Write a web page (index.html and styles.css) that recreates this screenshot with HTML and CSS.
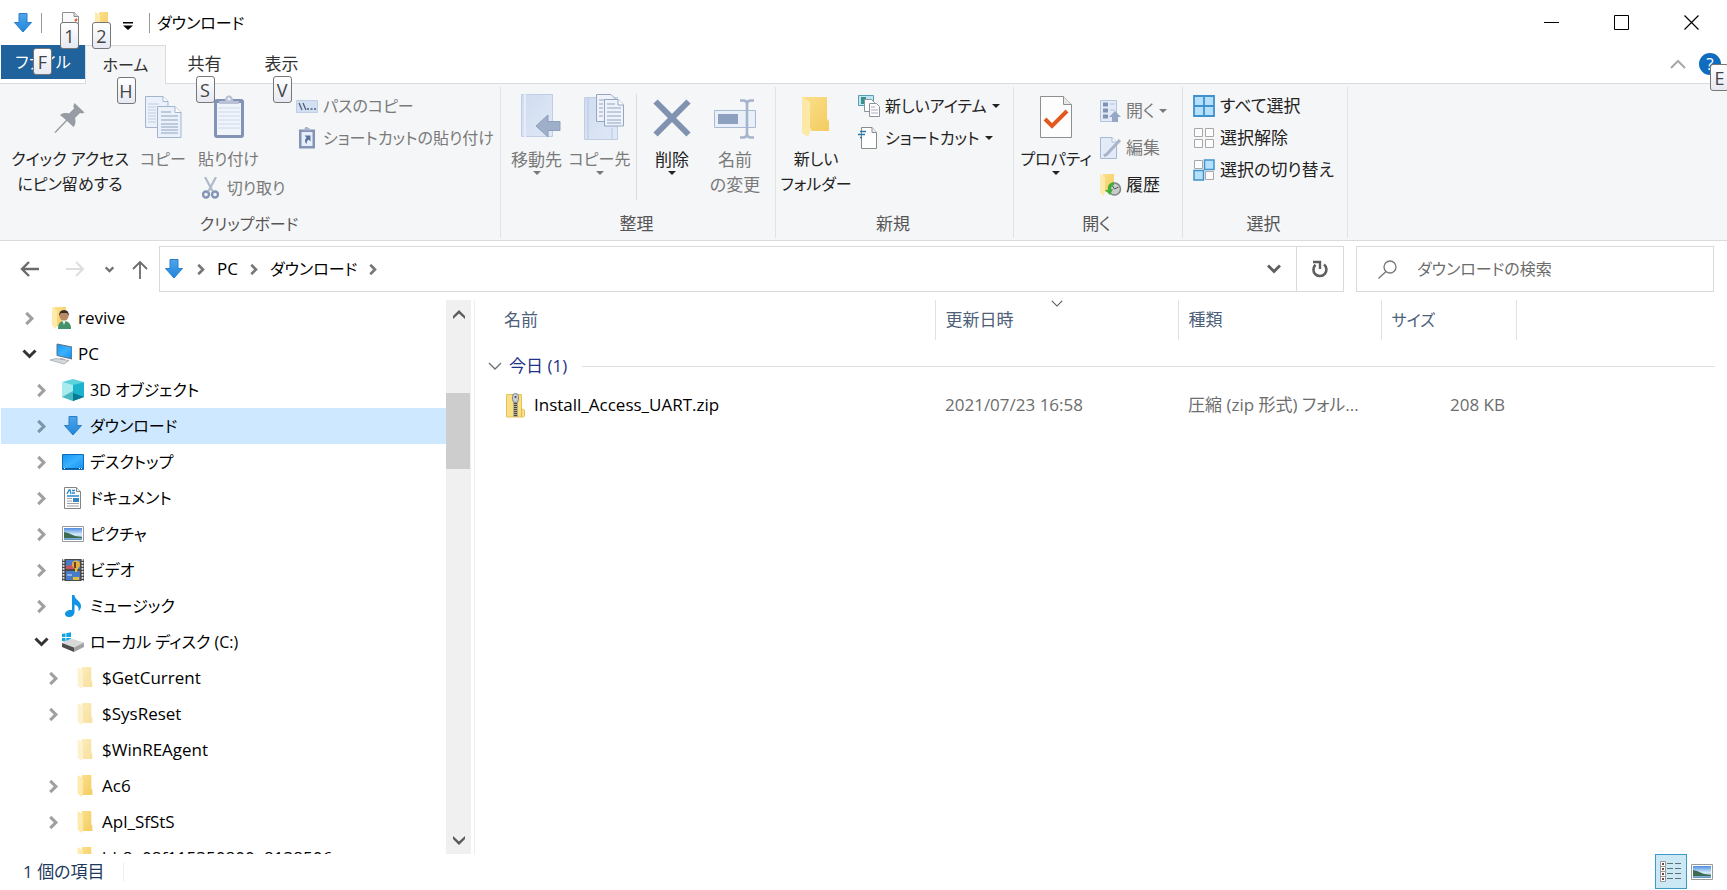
FILE: index.html
```html
<!DOCTYPE html>
<html lang="ja">
<head>
<meta charset="utf-8">
<title>ダウンロード</title>
<link rel="stylesheet" href="styles.css">
</head>
<body>
<svg class="defs" aria-hidden="true">
  <defs>
    <linearGradient id="blueArrow" x1="0" y1="0" x2="0" y2="1"><stop offset="0" stop-color="#4fa5ea"/><stop offset="1" stop-color="#1f86dc"/></linearGradient>
    <linearGradient id="folderBack" x1="0" y1="0" x2="1" y2="1"><stop offset="0" stop-color="#fbe08a"/><stop offset="1" stop-color="#f3cb60"/></linearGradient>
    <linearGradient id="screen" x1="0" y1="0" x2="1" y2="1"><stop offset="0" stop-color="#1298f4"/><stop offset=".5" stop-color="#3bb0ff"/><stop offset="1" stop-color="#0f92f0"/></linearGradient>
    <linearGradient id="sky" x1="0" y1="0" x2="0" y2="1"><stop offset="0" stop-color="#4f8de0"/><stop offset=".55" stop-color="#d5ecfa"/><stop offset="1" stop-color="#5b93bf"/></linearGradient>
    <linearGradient id="sheet" x1="0" y1="0" x2="1" y2="1"><stop offset="0" stop-color="#cfdcf0"/><stop offset="1" stop-color="#dfe8f6"/></linearGradient>
    <symbol id="down" viewBox="0 0 18 20"><path d="M5 .5h8v9h4.500L9 19 .5 9.500H5z" fill="url(#blueArrow)" stroke="#2b7fc8"/></symbol>
    <symbol id="folder" viewBox="0 0 14 21"><path d="M4 0h9v13l1 1v5H4z" fill="url(#folderBack)"/><path d="M0 0l5 3v15l-1 3-4-3z" fill="#fdeaac"/></symbol>
    <symbol id="chevR" viewBox="0 0 10 14"><path d="M1.500 1l6 6-6 6" fill="none" stroke="currentColor" stroke-width="3.400"/></symbol>
    <symbol id="chevD" viewBox="0 0 14 10"><path d="M1 1.500l6 6 6-6" fill="none" stroke="currentColor" stroke-width="3"/></symbol>
    <symbol id="thinD" viewBox="0 0 14 8"><path d="M1 1l6 6 6-6" fill="none" stroke="currentColor" stroke-width="1.300"/></symbol>
    <symbol id="picture" viewBox="0 0 22 16"><path d="M.5.5h21v15H.5z" fill="#fff" stroke="#9a9a9a"/><path d="M2 2h18v12H2z" fill="url(#sky)"/><path d="M2 6l4 1 7 3 7 1v1H2z" fill="#3d6b52"/></symbol>
  </defs>
</svg>

<header class="titlebar">
  <svg class="ic-down"><use href="#down"/></svg>
  <span class="bar"></span>
  <button class="quick" aria-label="プロパティ"><svg width="17" height="22" viewBox="0 0 17 22"><path d="M.5.5H12l4.500 4v17H.5z" fill="#fafafa" stroke="#8f8f8f"/><path d="M12 .5v4h4.500" fill="#ddd" stroke="#8f8f8f"/><path d="M13 9l2-2" stroke="#d8552a" stroke-width="2"/></svg><kbd class="tip tip-quick">1</kbd></button>
  <button class="quick" aria-label="新しいフォルダー"><svg width="14" height="21"><use href="#folder"/></svg><kbd class="tip tip-quick">2</kbd></button>
  <button class="customize" aria-label="クイック アクセス ツール バーのユーザー設定"><svg width="10" height="8" viewBox="0 0 10 8"><path d="M0 0h10v1.500H0zM0 3.500h10L5 8z"/></svg></button>
  <span class="bar"></span>
  <h1>ダウンロード</h1>
  <div class="window-buttons">
    <button aria-label="最小化"><svg width="15" height="15"><path d="M0 7.500h15" stroke="#000"/></svg></button>
    <button aria-label="最大化"><svg width="15" height="15"><path d="M.5.5h14v14H.5z" fill="none" stroke="#000"/></svg></button>
    <button aria-label="閉じる"><svg width="15" height="15"><path d="M.5.5l14 14M14.500.5l-14 14" stroke="#000" stroke-width="1.200"/></svg></button>
  </div>
</header>

<nav class="tabs">
  <button class="tab file kana">ファイル<kbd class="tip tip-file">F</kbd></button>
  <button class="tab home kana">ホーム<kbd class="tip tip-tab">H</kbd></button>
  <button class="tab">共有<kbd class="tip tip-tab">S</kbd></button>
  <button class="tab">表示<kbd class="tip tip-tab">V</kbd></button>
  <div class="tabs-end">
    <button aria-label="リボンの最小化"><svg width="16" height="10" viewBox="0 0 16 10"><path d="M1 9l7-7 7 7" fill="none" stroke="#a8a8a8" stroke-width="2"/></svg></button>
    <button class="help" aria-label="ヘルプ">?<kbd class="tip tip-help">E</kbd></button>
  </div>
</nav>

<section class="ribbon">
  <div class="group clipboard">
    <div class="tools">
      <button class="big w-pin kana">
        <svg width="32" height="32" viewBox="0 0 32 32"><path d="M20.500 1l10 9.500-2.500 1-2-.5-5 5c1 3.500.5 7-1.500 9L13 19 2 30.500l-1.500.5.500-1.500L12 18l-6-5c2.500-2 5.500-2.500 9-1.500l5-5-.7-2.500z" fill="#969ca3"/></svg>
        <span>クイック アクセス<br>にピン留めする</span>
      </button>
      <button class="big off w-copy kana">
        <svg width="37" height="42" viewBox="0 0 37 42"><g fill="#eaf1fa" stroke="#a4b4ce"><path d="M.5.5H18l5 5v26H.5z"/><path d="M12.500 10.500H30l6 6v25h-23.500z"/><path d="M30 10.500v6h6M18 .5v5h5" fill="#fff"/></g><path d="M3 8h11M3 11h8M3 14h8M3 17h8M3 20h8M3 23h8M3 26h8" stroke="#c2cde0"/><path d="M16 16h10M16 20h17M16 24h17M16 28h17M16 31h17M16 34h17M16 37h17" stroke="#90a2bf"/></svg>
        <span>コピー</span>
      </button>
      <div class="stack paste">
        <button class="big off kana">
          <svg width="30" height="43" viewBox="0 0 30 43"><rect y="4" width="30" height="39" rx="3" fill="#8293b5"/><path d="M3 8h24v32H3z" fill="#eff4fb"/><path d="M4 13h22M4 17h22M4 21h22M4 25h22M4 29h22M4 33h22" stroke="#cdd9ea"/><path d="M5 9V6h6c0-3 1-5.500 4-5.500S19 3 19 6h6v3z" fill="#b8c2d4"/><circle cx="15" cy="4" r="1.500" fill="#eef2f8"/></svg>
          <span>貼り付け</span>
        </button>
        <button class="small cut off kana"><svg width="17" height="22" viewBox="0 0 17 22"><path d="M3 0l7.500 14M14 0L6.500 14" stroke="#b0bacb" stroke-width="2.200"/><g fill="none" stroke="#8394b4" stroke-width="2.400"><circle cx="4" cy="17.500" r="3"/><circle cx="13" cy="17.500" r="3"/></g></svg>切り取り</button>
      </div>
      <div class="stack paths">
        <button class="small off kana"><svg width="22" height="13" viewBox="0 0 22 13"><path d="M.5.5h21v12H.5z" fill="#d3e0f2" stroke="#c0cfe4"/><path d="M3 3l3 7M7 3l3 7" stroke="#4e5f80" stroke-width="1.300"/><path d="M11 9h2M14.500 9h2M18 9h2" stroke="#4e5f80" stroke-width="1.500"/></svg>パスのコピー</button>
        <button class="small off kana"><svg width="22" height="22" viewBox="0 0 22 22"><path d="M3 2.500h16v19H3z" fill="#8293b5"/><path d="M5.500 5h11v14h-11z" fill="#e6eefa"/><path d="M7 3.500h8L13 1h-1a1.500 1.500 0 0 0-3 0z" fill="#a9b5ca"/><path d="M8.500 8.500h6v6l-2-2q-2 1-2 4.500-3-3 0-6.500z" fill="#5c7199"/></svg>ショートカットの貼り付け</button>
      </div>
    </div>
    <h2 class="kana">クリップボード</h2>
  </div>

  <div class="group organize">
    <div class="tools">
      <button class="big off w-move">
        <svg width="40" height="44" viewBox="0 0 40 44"><path d="M.5.5h31v42H.5z" fill="url(#sheet)" stroke="#c0cee4"/><path d="M4 0v43" stroke="#e6edf8" stroke-width="2"/><path d="M39 27.500v9H27V43L15 32l12-11v6.500z" fill="#9fafc9" stroke="#8e9fbb"/></svg>
        <span>移動先</span><i class="caret"></i>
      </button>
      <button class="big off w-move kana">
        <svg width="40" height="46" viewBox="0 0 40 46"><path d="M.5 3.500h33v42H.5z" fill="url(#sheet)" stroke="#c0cee4"/><path d="M4 4v41M28 34v11" stroke="#b9c9e0"/><g fill="#eef3fb" stroke="#95a6c1"><path d="M12.500.5H27l5 5v22H12.500z"/><path d="M20.500 5.500H34l5.500 5.500v21h-19z"/><path d="M34 5.500V11h5.500" fill="#fff"/></g><path d="M15 6h5M15 10h4M15 14h4M15 18h4M15 22h4M23 10h8M23 14h14M23 18h14M23 22h14M23 26h14M23 29h14" stroke="#93a4c0"/></svg>
        <span>コピー先</span><i class="caret"></i>
      </button>
      <span class="divider"></span>
      <button class="big w-delete">
        <svg width="38" height="38" viewBox="0 0 38 38"><path d="M2.500 2.500l33 33M35.500 2.500l-33 33" stroke="#8191b0" stroke-width="6"/></svg>
        <span>削除</span><i class="caret"></i>
      </button>
      <button class="big off w-rename">
        <svg width="42" height="40" viewBox="0 0 42 40"><path d="M.5 11.500h41v17H.5z" fill="#e9f0fa" stroke="#aab9d2"/><path d="M4 15h20v10H4z" fill="#8ea0bf"/><path d="M26 1.500h3q4 0 4 4v29q0 4-4 4h-3M40 1.500h-3q-4 0-4 4M33 34q0 4.500 4 4.500h3" fill="none" stroke="#a6b4cb" stroke-width="2.600"/></svg>
        <span>名前<br>の変更</span>
      </button>
    </div>
    <h2>整理</h2>
  </div>

  <div class="group new">
    <div class="tools">
      <button class="big w-folder kana">
        <svg width="28" height="42" viewBox="0 0 28 42"><path d="M0 1h25v22l2 2v10H9z" fill="url(#folderBack)"/><path d="M0 1l8 5v30l-2 5-6-4z" fill="#fce9a8"/></svg>
        <span>新しい<br>フォルダー</span>
      </button>
      <div class="stack">
        <button class="small kana"><svg width="22" height="22" viewBox="0 0 22 22"><path d="M.5.500h15v10H.5z" fill="#bfe6f5" stroke="#5d9db3"/><path d="M3 2h5v7H3z" fill="#3c8f86"/><g fill="#fff" stroke="#8a929d"><path d="M6.500 4.500h7l3 3v9h-10z"/><path d="M11.500 8.500h7l3 3v10h-10z"/></g><path d="M13 12h4M13 15h7M13 18h7" stroke="#b3a8bd"/></svg>新しいアイテム<i class="caret"></i></button>
        <button class="small kana"><svg width="22" height="22" viewBox="0 0 22 22"><path d="M3.500.5H14l4.500 5v16h-15z" fill="#fff" stroke="#8b8b8b"/><path d="M14 .5v5h4.500" fill="#eee" stroke="#8b8b8b"/><path d="M2 4.500h6M0 7.500h7M2 10.500h2" stroke="#2779a8" stroke-width="1.500"/></svg>ショートカット<i class="caret"></i></button>
      </div>
    </div>
    <h2>新規</h2>
  </div>

  <div class="group open">
    <div class="tools">
      <button class="big w-prop kana">
        <svg width="32" height="42" viewBox="0 0 32 42"><path d="M.5.5h23l8 8v33H.5z" fill="#fdfdfd" stroke="#8f8f8f"/><path d="M23.500.5v8h8" fill="#e8e8e8" stroke="#8f8f8f"/><path d="M5 23l7 7 15-15" fill="none" stroke="#e2591f" stroke-width="4"/></svg>
        <span>プロパティ</span><i class="caret"></i>
      </button>
      <div class="stack open-list">
        <button class="small off"><svg width="22" height="22" viewBox="0 0 22 22"><path d="M.5.5h16v21H.5z" fill="#e3ebf8" stroke="#b4c2da"/><path d="M3 2.500h5v4H3zM3 8.500h5v4H3zM3 14.500h5v4H3z" fill="#8193b4"/><path d="M10 4h5M10 10h5" stroke="#b4c2da"/><path d="M15 11l6 6h-3v5h-6v-5H9z" fill="#96a7c5"/></svg>開く<i class="caret"></i></button>
        <button class="small off"><svg width="22" height="22" viewBox="0 0 22 22"><path d="M.5.5H12l4.500 4.500v16.500H.5z" fill="#e3ebf8" stroke="#a9b8d2"/><path d="M12 .5V5h4.500" fill="#fff" stroke="#a9b8d2"/><path d="M20 3L7 17l-3 2" fill="none" stroke="#a7b4ca" stroke-width="3"/></svg>編集</button>
        <button class="small"><svg width="22" height="22" viewBox="0 0 22 22"><path d="M3 0h11v18H3z" fill="url(#folderBack)"/><path d="M0 0l5 3v15l-1 4-4-3z" fill="#fdeaac"/><circle cx="14.500" cy="15" r="6" fill="#c8ccca" stroke="#7f8583" stroke-width="1.500"/><path d="M14.500 15l-2-3M14.500 15l4-2" stroke="#555"/><path d="M14 8q-7 1-6 8H5l5 5 3-6h-2q0-3 3-4z" fill="#3fae3d"/></svg>履歴</button>
      </div>
    </div>
    <h2>開く</h2>
  </div>

  <div class="group select">
    <div class="tools">
      <div class="stack">
        <button class="small"><svg width="22" height="22" viewBox="0 0 22 22"><path d="M1 1h20v20H1zM11 1v20M1 11h20" fill="#b5e0fb" stroke="#4092cd" stroke-width="1.800"/></svg>すべて選択</button>
        <button class="small"><svg width="22" height="22" viewBox="0 0 22 22"><path d="M1.500 1.500h8v8h-8zM12.500 1.500h8v8h-8zM1.500 12.500h8v8h-8zM12.500 12.500h8v8h-8z" fill="#fdfdfd" stroke="#a8a8a8"/></svg>選択解除</button>
        <button class="small"><svg width="22" height="22" viewBox="0 0 22 22"><path d="M1.500 1.500h8v8h-8zM12.500 12.500h8v8h-8z" fill="#fdfdfd" stroke="#a8a8a8"/><path d="M11.500 1h9.500v9.500h-9.500zM1 11.500h9.500V21H1z" fill="#b5e0fb" stroke="#4092cd" stroke-width="1.500"/></svg>選択の切り替え</button>
      </div>
    </div>
    <h2>選択</h2>
  </div>
</section>

<div class="navrow">
  <button aria-label="戻る"><svg width="19" height="16" viewBox="0 0 19 16"><path d="M19 8H2M9 1L2 8l7 7" fill="none" stroke="#6b6b6b" stroke-width="2.400"/></svg></button>
  <button class="forward" aria-label="進む"><svg width="19" height="16" viewBox="0 0 19 16"><path d="M0 8h17M10 1l7 7-7 7" fill="none" stroke="#dedede" stroke-width="2.200"/></svg></button>
  <button class="recent" aria-label="最近表示した場所"><svg width="9" height="7" viewBox="0 0 14 10"><path d="M1 1.500l6 6 6-6" fill="none" stroke="#707070" stroke-width="3.500"/></svg></button>
  <button class="up" aria-label="上へ"><svg width="16" height="19" viewBox="0 0 16 19"><path d="M8 19V2M1 9l7-7 7 7" fill="none" stroke="#6b6b6b" stroke-width="1.800"/></svg></button>
  <div class="address">
    <svg class="ic-down"><use href="#down"/></svg>
    <svg class="crumb"><use href="#chevR"/></svg><a href="#">PC</a>
    <svg class="crumb"><use href="#chevR"/></svg><a class="kana" href="#">ダウンロード</a>
    <svg class="crumb"><use href="#chevR"/></svg>
    <button class="history" aria-label="以前の場所"><svg width="14" height="10"><use href="#chevD"/></svg></button>
    <button class="refresh" aria-label="最新の情報に更新"><svg width="18" height="18" viewBox="0 0 18 18"><path d="M4.500 4.800A6.500 6.500 0 1 0 13 4.500" fill="none" stroke="#5f5f5f" stroke-width="2.600"/><path d="M2 2h7v7" fill="none" stroke="#5f5f5f" stroke-width="2.400"/></svg></button>
  </div>
  <label class="search"><svg width="19" height="19" viewBox="0 0 19 19"><circle cx="12" cy="7" r="6" fill="none" stroke="#777" stroke-width="1.300"/><path d="M8 11.500l-7.500 7" stroke="#777" stroke-width="1.300"/></svg><input class="kana" type="search" aria-label="検索" placeholder="ダウンロードの検索"></label>
</div>

<main>
  <aside>
    <ul class="tree">
      <li><svg class="tw"><use href="#chevR"/></svg><svg class="ic" viewBox="0 0 22 22"><path d="M4 0h12v19H4z" fill="url(#folderBack)"/><path d="M2 0l5 3v15l-1 4-4-3z" fill="#fdeaac"/><path d="M8 22q0-8 6-8 7 0 7 8z" fill="#44916c"/><path d="M12 13h4l-2 5z" fill="#e8f2ee"/><circle cx="14" cy="9" r="4.500" fill="#b98a68"/><path d="M9 9q0-6 5-6t5 6l-2-3h-6z" fill="#3a2c25"/></svg>revive</li>
      <li class="expanded"><svg class="tw"><use href="#chevD"/></svg><svg class="ic" viewBox="0 0 22 22"><path d="M7 1l15 3v12L7 12.500z" fill="url(#screen)" stroke="#62707c"/><path d="M10 15l5 1-1 3-4-2z" fill="#9aa4ad"/><path d="M0 17l6-1.500 13 2L14 21z" fill="#d5d9dc" stroke="#a2a8ae" stroke-width=".8"/></svg>PC</li>
      <li class="l1 kana"><svg class="tw"><use href="#chevR"/></svg><svg class="ic" viewBox="0 0 22 22"><path d="M0 3l11-3 11 3-11 4z" fill="#5fd3dd"/><path d="M0 3l11 3v16L0 18z" fill="#a6ebee"/><path d="M22 3L11 6v16l11-4z" fill="#1cb3cf"/><path d="M0 18l11-6v10z" fill="#4bb9c1"/><path d="M22 18l-11-4v8z" fill="#067b93"/></svg>3D オブジェクト</li>
      <li class="l1 kana current"><svg class="tw"><use href="#chevR"/></svg><svg class="ic" viewBox="-2 -1 22 22"><path d="M5 .5h8v9h4.500L9 19 .5 9.500H5z" fill="url(#blueArrow)" stroke="#2b7fc8"/></svg>ダウンロード</li>
      <li class="l1 kana"><svg class="tw"><use href="#chevR"/></svg><svg class="ic" viewBox="0 0 22 22"><path d="M.5 3.500h21v15H.5z" fill="url(#screen)" stroke="#0d6db8"/><path d="M1 17.500h20" stroke="#0a5b9e"/><path d="M2 17.500h1M17 17.500h1M19 17.500h1" stroke="#fff"/></svg>デスクトップ</li>
      <li class="l1 kana"><svg class="tw"><use href="#chevR"/></svg><svg class="ic" viewBox="0 0 22 22"><path d="M2.500.5h12l4 4v17h-16z" fill="#fff" stroke="#848484"/><path d="M14.500.5v4h4" fill="#eee" stroke="#848484"/><path d="M5 7l2-4h1l1 4M10 3.500h3M10 6h3M5 9h12" fill="none" stroke="#288bd0" stroke-width="1.300"/><path d="M5 11.500h5M5 14h5M5 16.500h12M5 19h12" stroke="#a0a0a0"/><path d="M11 11h6v4h-6z" fill="#3486c2"/></svg>ドキュメント</li>
      <li class="l1 kana"><svg class="tw"><use href="#chevR"/></svg><svg class="ic"><use href="#picture"/></svg>ピクチャ</li>
      <li class="l1 kana"><svg class="tw"><use href="#chevR"/></svg><svg class="ic" viewBox="0 0 22 22"><path d="M0 0h22v22H0z" fill="#494949"/><path d="M1.500 0v22M20.500 0v22" stroke="#e8e8e8" stroke-width="1.800" stroke-dasharray="1.700 1.300"/><path d="M4 1h14v9H4zM4 12h14v9H4z" fill="#4a7bc8"/><path d="M4 7l5-1 4 4H4z" fill="#cf5262"/><circle cx="14" cy="5.500" r="4" fill="#e0b13c"/><path d="M12 3h2v6h-2z" fill="#7a3a1a"/><path d="M13 9h3l-1 4h-2zM11 18h6v3h-6z" fill="#e6bc32"/><path d="M5 15h5v2H5z" fill="#8fb4e8"/></svg>ビデオ</li>
      <li class="l1 kana"><svg class="tw"><use href="#chevR"/></svg><svg class="ic" viewBox="0 0 22 22"><path d="M10 0h2.500c0 5 6.500 5.500 6.500 11 0 2-.8 4-2.500 5.500.8-4-.8-6-4-7V17c0 3-2.500 5-5.500 5-2.400 0-4-1.200-4-3 0-2.500 3-4.500 7-4z" fill="#1193e6"/></svg>ミュージック</li>
      <li class="l1 kana expanded"><svg class="tw"><use href="#chevD"/></svg><svg class="ic" viewBox="0 0 22 22"><path d="M0 3l3.500-.7V6H0zM4.300 2.200L9 1.300V6H4.300zM0 7h3.500v3.500L0 10zM4.300 7H9v4.400l-4.700-.8z" fill="#12a4e4"/><path d="M0 12l9-4.500 13 4-10 5z" fill="#d9d9d9"/><path d="M0 12l12 4.500V21L0 16z" fill="#4d4d4d"/><path d="M22 11.500V16l-10 5v-4.500z" fill="#a3a3a3"/></svg>ローカル ディスク (C:)</li>
      <li class="l2"><svg class="tw"><use href="#chevR"/></svg><svg class="ic faded"><use href="#folder"/></svg>$GetCurrent</li>
      <li class="l2"><svg class="tw"><use href="#chevR"/></svg><svg class="ic faded"><use href="#folder"/></svg>$SysReset</li>
      <li class="l2"><span class="tw"></span><svg class="ic faded"><use href="#folder"/></svg>$WinREAgent</li>
      <li class="l2"><svg class="tw"><use href="#chevR"/></svg><svg class="ic"><use href="#folder"/></svg>Ac6</li>
      <li class="l2"><svg class="tw"><use href="#chevR"/></svg><svg class="ic"><use href="#folder"/></svg>Apl_SfStS</li>
      <li class="l2"><span class="tw"></span><svg class="ic"><use href="#folder"/></svg>bb8a08f115350800a8138506</li>
    </ul>
    <div class="scroll">
      <button aria-label="上へスクロール"><svg width="12" height="9" viewBox="0 0 12 9"><path d="M0 6l6-6 6 6v3L6 3.500 0 9z" fill="#5a5a5a"/></svg></button>
      <div class="track"><div class="thumb"></div></div>
      <button aria-label="下へスクロール"><svg width="12" height="9" viewBox="0 0 12 9"><path d="M0 3l6 6 6-6V0L6 5.500 0 0z" fill="#5a5a5a"/></svg></button>
    </div>
  </aside>
  <section class="files">
    <table>
      <colgroup><col class="c-name"><col class="c-date"><col class="c-type"><col class="c-size"><col></colgroup>
      <thead><tr><th class="name">名前</th><th>更新日時<svg class="sort" width="12" height="7"><use href="#thinD"/></svg></th><th>種類</th><th class="kana">サイズ</th><td></td></tr></thead>
      <tbody>
        <tr class="group-row"><td colspan="5"><div><svg width="14" height="8"><use href="#thinD"/></svg><span>今日 (1)</span><hr></div></td></tr>
        <tr class="file-row">
          <td class="name"><div><svg width="19" height="25" viewBox="0 0 19 25"><path d="M.5 1.500h15V16l3 1v6l-1 1H.5z" fill="#fbdf85" stroke="#e5c25a"/><path d="M15.500 15v9" stroke="#e0b94e"/><path d="M7 1h5v23H7z" fill="#b5ae8c"/><path d="M9.500 10v14" stroke="#444" stroke-width="3" stroke-dasharray="1 1"/><rect x="6.500" y=".5" width="6" height="9" rx="3" fill="#c9cdd0" stroke="#85898c"/><circle cx="9.500" cy="4" r="1" fill="#444"/></svg>Install_Access_UART.zip</div></td>
          <td>2021/07/23 16:58</td><td>圧縮 (zip 形式) フォル...</td><td class="size">208 KB</td><td></td>
        </tr>
      </tbody>
    </table>
  </section>
</main>

<footer>
  <span class="count">1 個の項目</span>
  <div class="views">
    <button class="active" aria-label="詳細"><svg width="22" height="22" viewBox="0 0 22 22"><path d="M.5.5h5v5h-5zM.5 5.500h5v5h-5zM.5 10.500h5v5h-5zM.5 15.500h5v5h-5z" fill="#fff" stroke="#999"/><path d="M2 3h2M2 8h2M2 13h2M2 18h2" stroke="#744" stroke-width="2"/><path d="M7 2.500h6M15 2.500h6M7 7.500h6M15 7.500h6M7 12.500h6M15 12.500h6M7 17.500h6M15 17.500h6" stroke="#5d7078"/></svg></button>
    <button aria-label="大アイコン"><svg width="22" height="16"><use href="#picture"/></svg></button>
  </div>
</footer>
</body>
</html>
```

FILE: styles.css
```css
* { box-sizing: border-box; }
body {
  margin: 0;
  height: 100vh;
  display: flex;
  flex-direction: column;
  overflow: hidden;
  background: #fff;
  color: #111;
  font: 17px/24px "Open Sans", "Noto Sans CJK JP", sans-serif;
  font-feature-settings: "palt";
}
button {
  border: 0;
  padding: 0;
  background: none;
  color: inherit;
  font: inherit;
  font-feature-settings: inherit;
}
svg { display: block; flex: none; }
.defs { position: absolute; width: 0; height: 0; }
.ic-down { width: 18px; height: 20px; }

.tip {
  position: absolute;
  z-index: 2;
  width: 19px;
  height: 27px;
  border: 1px solid #777;
  border-radius: 3px;
  background: linear-gradient(#fff, #e6e9f2);
  color: #444;
  font: 18px/26px "Open Sans", sans-serif;
  text-align: center;
}

/* Title bar */
.titlebar {
  display: flex;
  align-items: center;
  height: 45px;
  padding-left: 14px;
  flex: none;
}
.bar { width: 1px; height: 20px; margin-left: 9px; background: #999; }
.quick { position: relative; display: flex; justify-content: center; width: 32px; }
.bar + .quick { margin-left: 12px; }
.tip-quick { left: 6px; top: 10px; }
.customize { margin-left: 5px; padding-top: 6px; }
.customize + .bar { margin-left: 16px; }
h1 { margin: 0 0 0 7px; font-size: 16px; font-weight: 400; color: #000; }
.window-buttons { display: flex; margin: 0 1px 0 auto; }
.window-buttons button { display: flex; justify-content: center; width: 70px; }

/* Tabs */
.tabs { display: flex; height: 38px; padding-left: 1px; flex: none; }
.tab { position: relative; width: 77px; height: 38px; color: #333; }
.tab.file { width: 84px; height: 34px; background: #20629b; color: #fff; }
.tab.home {
  z-index: 1;
  width: 81px;
  height: 39px;
  border: 1px solid #dadbdc;
  border-bottom: 0;
  background: #f5f6f7;
}
.tip-file { left: 32px; top: 3px; }
.tip-tab { left: calc(50% - 9px); top: 31px; }
.tabs-end { display: flex; align-items: center; gap: 13px; margin-left: auto; padding-right: 6px; }
.help { position: relative; width: 22px; height: 22px; border-radius: 50%; background: #0f6cbf; color: #fff; line-height: 22px; }
.tip-help { left: 11px; top: 11px; }

/* Ribbon */
.ribbon {
  display: flex;
  flex: none;
  height: 158px;
  padding: 3px 0 2px 1px;
  border: solid #dadbdc;
  border-width: 1px 0;
  background: #f5f6f7;
  color: #222;
}
.group { display: flex; flex-direction: column; border-right: 1px solid #e1e2e4; }
.tools { display: flex; flex: 1; padding-top: 7px; }
.clipboard { width: 500px; }
.organize { width: 275px; }
.new { width: 238px; }
.open { width: 169px; }
.select { width: 165px; }
.group h2 { margin: 0; padding: 0 3px 2px 0; color: #555; font-size: 17px; font-weight: 400; text-align: center; }
.big { position: relative; display: flex; flex-direction: column; align-items: center; height: 113px; }
.big svg { margin-bottom: auto; }
.big span { height: 60px; line-height: 25px; white-space: nowrap; }
.big .caret { position: absolute; top: 77px; left: calc(50% - 4px); }
.off { color: #7a7a7a; }
.caret { width: 0; height: 0; border: solid transparent; border-width: 4px 4px 0; border-top-color: currentColor; }
.small { display: flex; align-items: center; gap: 5px; height: 24px; white-space: nowrap; }
.stack { display: flex; flex-direction: column; gap: 8px; }
.w-pin { width: 138px; }
.w-pin svg { margin-top: 8px; }
.w-copy { width: 48px; }
.w-copy svg { margin-top: 2px; }
.paste { width: 83px; align-items: center; gap: 0; }
.paste .big { height: 82px; }
.paste .big svg { margin-top: 1px; }
.paste .big span { height: 29px; }
.paste .cut { gap: 8px; margin-left: 30px; }
.paths { padding-left: 26px; }
.w-move { width: 63px; }
.w-move svg { margin-left: 9px; }
.organize .tools { padding-left: 4px; }
.w-delete { width: 70px; }
.w-delete svg, .w-rename svg { margin-top: 5px; }
.w-rename { width: 56px; }
.divider { width: 1px; height: 106px; background: #dcdde0; margin-left: 5px; }
.w-folder { width: 80px; }
.new .stack { padding-left: 2px; }
.select .stack { padding-left: 10px; }
.w-prop { width: 84px; }
.w-prop svg, .w-folder svg { margin-top: 2px; }
.open-list { gap: 13px; padding: 5px 0 0 2px; }
.open-list .small { gap: 4px; }
.ribbon .kana, .kana { font-size: 16px; }

/* Address row */
.navrow { display: flex; align-items: center; flex: none; height: 58px; padding: 5px 13px 7px 20px; }
.navrow > button { width: 46px; }
.navrow > .forward { width: 39px; }
.navrow > .recent { width: 22px; }
.navrow > .up { padding-left: 5px; width: 32px; }
.address { display: flex; align-items: center; flex: 1; height: 46px; border: 1px solid #d9d9d9; padding-left: 5px; }
.address a { color: #000; text-decoration: none; margin: 0 12px; }
.crumb { width: 8px; height: 11px; color: #777; }
.address .ic-down { margin-right: 14px; }
.history { margin-left: auto; color: #606060; }
.refresh { display: flex; align-items: center; justify-content: center; width: 47px; height: 44px; margin-left: 15px; border-left: 1px solid #d9d9d9; }
.search { display: flex; align-items: center; gap: 20px; width: 358px; height: 46px; margin-left: 12px; padding-left: 21px; border: 1px solid #d9d9d9; }
.search input { flex: 1; min-width: 0; border: 0; outline: 0; padding: 0; font-family: inherit; font-feature-settings: inherit; }
.search input::placeholder { color: #6d6d6d; }

/* Panes */
main { display: flex; flex: 1; min-height: 0; padding-top: 1px; }
aside { display: flex; width: 475px; border-right: 1px solid #eee; padding-left: 1px; }
.tree { flex: 1; margin: 0; padding: 0; list-style: none; overflow: hidden; color: #000; }
.tree li { display: flex; align-items: center; height: 36px; padding-left: 21px; white-space: nowrap; }
.tree .l1 { padding-left: 33px; }
.tree .l2 { padding-left: 45px; }
.tree .current { background: #cde8ff; }
.tree .current .tw { color: #7e95a8; }
.tw { width: 15px; height: 13px; margin-right: 13px; color: #a0a0a0; }
.expanded .tw { width: 15px; height: 10px; color: #333; }
.ic { width: 22px; height: 22px; margin-right: 6px; }
.faded { opacity: .6; }
.scroll { display: flex; flex-direction: column; width: 25px; margin-right: 3px; background: #f0f0f0; }
.scroll button { display: flex; align-items: center; justify-content: center; height: 28px; }
.track { flex: 1; padding-top: 65px; }
.thumb { height: 76px; margin-right: 1px; background: #cdcdcd; }
.files { flex: 1; padding-right: 12px; }
table { width: 100%; border-collapse: collapse; table-layout: fixed; }
.c-name { width: 460px; }
.c-date { width: 243px; }
.c-type { width: 203px; }
.c-size { width: 135px; }
th { position: relative; height: 40px; padding: 0 10px; border-right: 1px solid #e2e2e2; color: #4c607a; font-weight: 400; text-align: left; }
td { padding: 0 10px; color: #6d6d6d; white-space: nowrap; }
th.name, td.name { padding-left: 29px; }
.sort { position: absolute; left: calc(50% - 6px); top: 0; color: #555; }
.group-row { height: 52px; color: #666; }
.group-row td { padding: 0 0 0 13px; }
.group-row div { display: flex; align-items: center; gap: 7px; }
.group-row span { color: #1e3287; margin-right: 8px; }
hr { flex: 1; margin: 0; border: 0; border-top: 1px solid #e0e0e0; }
.file-row { height: 26px; }
.file-row .name { color: #000; }
.name div { display: flex; align-items: center; gap: 9px; }
.name div svg { margin-left: 2px; }
.size { text-align: right; padding-right: 11px; }

/* Status bar */
footer { display: flex; align-items: center; justify-content: space-between; flex: none; height: 36px; padding: 0 14px 0 23px; color: #1e395b; }
.count { border-right: 1px solid #eee; padding-right: 18px; line-height: 20px; }
.views { display: flex; align-self: flex-start; align-items: center; gap: 4px; }
.views button { display: flex; align-items: center; justify-content: center; }
.views .active { width: 32px; height: 35px; border: 1px solid #3b9ac6; background: #cce8f4; }
```
